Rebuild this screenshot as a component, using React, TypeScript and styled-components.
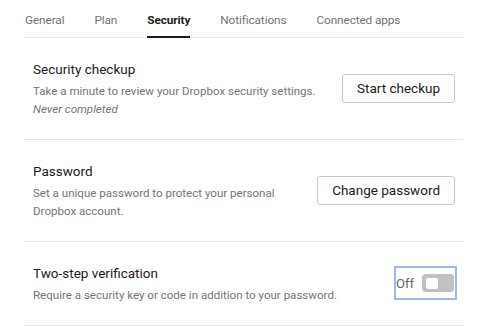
import React from "react";
import styled, { createGlobalStyle } from "styled-components";

const GlobalStyle = createGlobalStyle`
  body {
    margin: 0;
    background: #ffffff;
    font-family: Roboto, "Noto Sans", "Liberation Sans", sans-serif;
    color: #1e1919;
  }
`;

const Page = styled.div`
  width: 439px;
  padding-left: 24px;
`;

const TabBar = styled.nav`
  display: flex;
  gap: 30px;
  padding-left: 1px;
  border-bottom: 1px solid #e6e6e6;
`;

const Tab = styled.a<{ $active?: boolean }>`
  padding: 12px 0 8px;
  margin-bottom: -1px;
  font-size: 11.8px;
  letter-spacing: -0.1px;
  line-height: 16px;
  color: ${(p) => (p.$active ? "#1e1919" : "#737373")};
  font-weight: ${(p) => (p.$active ? 700 : 400)};
  border-bottom: 2px solid ${(p) => (p.$active ? "#1e1919" : "transparent")};
  cursor: pointer;
`;

const Section = styled.section`
  display: flex;
  align-items: center;
  justify-content: space-between;
  gap: 20px;
  padding: 20px 8px 21px 9px;
  border-bottom: 1px solid #e6e6e6;
`;

const Info = styled.div`
  flex: 1;
  min-width: 0;
`;

const Title = styled.h3`
  margin: 0 0 2px;
  font-size: 13.5px;
  line-height: 22px;
  font-weight: 400;
  color: #1e1919;
`;

const Description = styled.p<{ $italic?: boolean }>`
  margin: 0;
  font-size: 11.55px;
  line-height: 18px;
  color: #757575;
  font-style: ${(p) => (p.$italic ? "italic" : "normal")};
`;

const Button = styled.button`
  flex-shrink: 0;
  height: 29px;
  padding: 0 14px;
  border: 1px solid #c9c9c9;
  border-radius: 3px;
  background: #ffffff;
  font-family: inherit;
  font-size: 13.5px;
  color: #1e1919;
  cursor: pointer;
`;

const Toggle = styled.button`
  flex-shrink: 0;
  display: inline-flex;
  align-items: center;
  gap: 8px;
  height: 30px;
  padding: 0 1px 0 0;
  border: none;
  background: transparent;
  outline: 2px solid #9dbde9;
  font-family: inherit;
  font-size: 13px;
  color: #5f6670;
  cursor: pointer;
`;

const Track = styled.span<{ $on?: boolean }>`
  display: flex;
  align-items: center;
  width: 32px;
  height: 18px;
  padding: 0 4px;
  box-sizing: border-box;
  border-radius: 4px;
  background: ${(p) => (p.$on ? "#0061fe" : "#c1c1c1")};
  justify-content: ${(p) => (p.$on ? "flex-end" : "flex-start")};
`;

const Knob = styled.span`
  width: 12px;
  height: 11px;
  border-radius: 2px;
  background: #ffffff;
`;

const tabs = ["General", "Plan", "Security", "Notifications", "Connected apps"];

export default function App() {
  return (
    <>
      <GlobalStyle />
      <Page>
        <TabBar>
          {tabs.map((t) => (
            <Tab key={t} $active={t === "Security"}>
              {t}
            </Tab>
          ))}
        </TabBar>

        <Section>
          <Info>
            <Title>Security checkup</Title>
            <Description>Take a minute to review your Dropbox security settings.</Description>
            <Description $italic>Never completed</Description>
          </Info>
          <Button>Start checkup</Button>
        </Section>

        <Section>
          <Info>
            <Title>Password</Title>
            <Description>Set a unique password to protect your personal Dropbox account.</Description>
          </Info>
          <Button>Change password</Button>
        </Section>

        <Section>
          <Info>
            <Title>Two-step verification</Title>
            <Description>Require a security key or code in addition to your password.</Description>
          </Info>
          <Toggle>
            Off
            <Track>
              <Knob />
            </Track>
          </Toggle>
        </Section>
      </Page>
    </>
  );
}
